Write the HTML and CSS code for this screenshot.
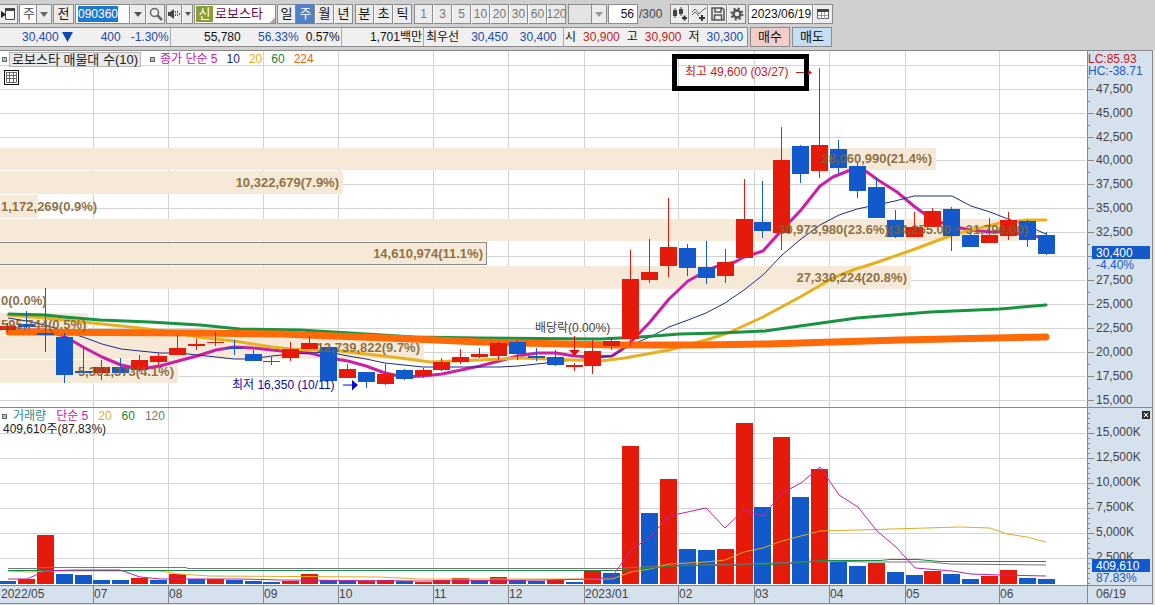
FILE: index.html
```html
<!DOCTYPE html>
<html lang="ko">
<head>
<meta charset="utf-8">
<title>로보스타 주봉 차트</title>
<link rel="stylesheet" href="styles.css">
</head>
<body>
<header class="toolbar">
  <div class="row">
    <button class="btn btn-edge" aria-label="패널 열기"><svg width="15" height="14" viewBox="0 0 15 14"><path d="M4.5 1.5h9v11h-9z" fill="#fff" stroke="#444"/><path d="M4 1h10v3H4z" fill="#444"/><path d="M0 4l5 3.500-5 3.500z" fill="#222"/></svg></button>
    <span class="select-wrap select-period"><select class="select" aria-label="종목 구분"><option>주</option></select><span class="caret" aria-hidden="true"></span></span>
    <button class="btn btn-prev">전</button>
    <div class="group code-group">
      <div class="code-box"><input class="code" aria-label="종목 코드" value="090360"></div>
      <button class="btn btn-small" aria-label="코드 목록"><span class="down"></span></button>
      <button class="btn" aria-label="검색"><svg width="14" height="14" viewBox="0 0 14 14" fill="none" stroke="#666"><circle cx="5.500" cy="5.500" r="4" stroke-width="1.500"/><path d="M8.500 8.500l4.500 4.500" stroke-width="2.500"/></svg></button>
    </div>
    <div class="group sound-group">
      <button class="btn btn-small" aria-label="소리"><svg width="14" height="12" viewBox="0 0 14 12"><path d="M1 4h2l4-3v10l-4-3H1z" fill="#444"/><path d="M8.500 3v6M10.500 3v6M12.500 5v2" stroke="#555" stroke-dasharray="2 1"/></svg></button>
      <button class="btn btn-tiny" aria-label="소리 설정"><span class="down"></span></button>
    </div>
    <div class="stock"><span class="badge">신</span><span class="stock-name">로보스타</span></div>
    <div class="group"><button class="btn">일</button><button class="btn active">주</button><button class="btn">월</button><button class="btn">년</button></div>
    <div class="group"><button class="btn">분</button><button class="btn">초</button><button class="btn">틱</button></div>
    <div class="group nums"><button class="btn">1</button><button class="btn">3</button><button class="btn">5</button><button class="btn">10</button><button class="btn">20</button><button class="btn">30</button><button class="btn">60</button><button class="btn">120</button></div>
    <span class="select-wrap select-empty"><select class="select" aria-label="분 단위" disabled><option></option></select><span class="caret" aria-hidden="true"></span></span>
    <input class="field count" aria-label="표시 개수" value="56"><span class="total">/300</span>
    <div class="group tools">
      <button class="btn" aria-label="봉 추가"><svg width="16" height="16" viewBox="0 0 16 16"><path d="M1 4h4v6H1zM7 3h4v5H7z" fill="#444"/><path d="M3 2v10M9 1v9" stroke="#444"/><path d="M10 12h5M12.500 9.500v5" stroke="#333" stroke-width="2"/></svg></button>
      <button class="btn" aria-label="지표 추가"><svg width="16" height="16" viewBox="0 0 16 16" fill="none" stroke="#666"><path d="M1 6l3-3 4 5 5-5 2-1M1 9l3-3 4 4"/><path d="M8 12h6M11 9v6" stroke="#333" stroke-width="2"/></svg></button>
      <button class="btn" aria-label="저장"><svg width="14" height="14" viewBox="0 0 14 14" fill="none" stroke="#555" stroke-width="1.500"><path d="M1 1h10l2 2v10H1zM4 1v4h6V1M3.500 13V8h7v5"/></svg></button>
      <button class="btn" aria-label="설정"><svg width="14" height="14" viewBox="0 0 14 14" fill="none" stroke="#555"><circle cx="7" cy="7" r="3.500" stroke-width="2.500"/><circle cx="7" cy="7" r="5.500" stroke-width="2" stroke-dasharray="2.200 2.120"/></svg></button>
    </div>
    <div class="group"><input class="field date" aria-label="날짜" value="2023/06/19"><button class="btn btn-cal" aria-label="달력"><svg width="12" height="12" viewBox="0 0 12 12"><path d="M.5 2.500h11v8H.5z" fill="#fff" stroke="#666"/><path d="M0 1h12v3H0z" fill="#444"/><path d="M4.500 4v7M7.500 4v7M1 7.500h10" stroke="#999"/></svg></button></div>
  </div>
  <div class="row">
    <div class="quote">
      <div class="cell cell-price down-text"><span>30,400</span><svg width="11" height="10" viewBox="0 0 11 10"><path d="M0 0h11L5.500 10z" fill="#1446b8"/></svg><span class="diff">400</span><span class="rate">-1.30%</span></div>
      <div class="cell cell-volume"><span>55,780</span><span class="down-text ratio">56.33%</span><span class="turn">0.57%</span></div>
      <div class="cell cell-value"><span>1,701백만</span></div>
      <div class="cell cell-best"><span>최우선</span><span class="down-text">30,450</span><span class="down-text">30,400</span></div>
      <div class="cell cell-ohl"><span>시</span><span class="up-text">30,900</span><span>고</span><span class="up-text">30,900</span><span>저</span><span class="down-text">30,300</span></div>
    </div>
    <button class="trade buy">매수</button>
    <button class="trade sell">매도</button>
  </div>
</header>
<main>
  <section class="pane" aria-label="가격 차트">
    <svg id="price" class="chart" viewBox="0 50 1155 357"></svg>
    <div class="legend">
      <i class="dot"></i><span class="chip">로보스타 매물대 수(10)</span><i class="dot dot-second"></i>
      <span class="c-ma5">종가 단순 5</span><span class="c-ma10">10</span><span class="c-ma20">20</span><span class="c-ma60">60</span><span class="c-ma224">224</span>
    </div>
    <button class="grid-btn" aria-label="표 보기"><svg width="11" height="11" viewBox="0 0 11 11" fill="none" stroke="#666"><path d="M.5.5h10v10H.5zM.5 3.500h10M.5 6.500h10M3.500.5v10M7.500.5v10"/></svg></button>
  </section>
  <section class="pane" aria-label="거래량 차트">
    <svg id="volume" class="chart" viewBox="0 407 1155 198"></svg>
    <div class="legend legend-volume">
      <i class="dot"></i><span class="c-vol">거래량</span><span class="c-ma5">단순 5</span><span class="c-ma20">20</span><span class="c-ma60">60</span><span class="c-ma120">120</span>
    </div>
    <div class="volume-now">409,610주(87.83%)</div>
    <button class="close" aria-label="닫기"><svg width="6" height="6" viewBox="0 0 6 6"><path d="M1 1l4 4M5 1L1 5" stroke="#fff"/></svg></button>
  </section>
</main>
<script src="chart.js"></script>
</body>
</html>
```
FILE: styles.css
```css
* { box-sizing: border-box; }
body {
  margin: 0;
  background: #d0d0d0;
  color: #111;
  font: 12px/16px "Liberation Sans", "Noto Sans CJK KR", sans-serif;
}
button, input, select { font: inherit; color: inherit; margin: 0; padding: 0; border-radius: 0; }

.toolbar { display: flex; flex-direction: column; gap: 3px; padding: 4px 0 3px; overflow: hidden; }
.row { display: flex; align-items: center; height: 20px; white-space: nowrap; }
.row > * { flex: none; }
.group { display: flex; margin-right: 2px; }
.btn {
  display: flex; align-items: center; justify-content: center; flex: none;
  width: 19px; height: 20px;
  background: #ececec; border: 1px solid #8c8c8c; border-left-color: #fff;
  font-size: 13px;
}
.group > .btn:first-child, .btn-prev { border-left-color: #8c8c8c; }
.btn.active { background: #4f81c4; border-color: #4f81c4 #8c8c8c #4f81c4 #4f81c4; color: #fff; }
.btn-edge { width: 18px; margin-right: 1px; border-left: 0; }
.btn-prev { width: 21px; margin: 0 1px; }
.btn-small { width: 16px; }
.btn-tiny { width: 11px; }
.down { border: 4px solid transparent; border-top: 5px solid #555; border-bottom: 0; }
.btn-tiny .down { border-width: 4px 3px 0; }
.select-wrap { position: relative; display: block; height: 20px; border: 1px solid #8c8c8c; background: #fff; }
.select { appearance: none; width: 100%; height: 18px; border: 0; padding-left: 3px; background: transparent; font-size: 13px; color: #444; }
.caret { position: absolute; top: 0; right: 0; width: 15px; height: 18px; background: #ececec; border-left: 1px solid #8c8c8c; pointer-events: none; }
.caret::after { content: ""; position: absolute; top: 7px; left: 3px; border: 4px solid transparent; border-top: 5px solid #666; border-bottom: 0; }
.select-period { width: 33px; }
.select-empty { width: 39px; margin-right: 1px; background: #e4e4e4; }
.select-empty .caret::after { border-top-color: #999; }
.code-box { width: 55px; padding: 1px 2px; background: #fff; border: 1px solid #8c8c8c; }
.code { display: block; width: 40px; height: 16px; border: 0; background: #1f78d0; color: #fff; }
.code-group { margin-right: 1px; }
.sound-group { margin-right: 1px; }
.stock { display: flex; align-items: center; width: 82px; height: 20px; margin-right: 1px; background: linear-gradient(135deg, transparent 94%, #aaa 94%) #fff; border: 1px solid #8c8c8c; font-size: 13px; }
.badge { width: 17px; height: 16px; margin: 0 2px 0 1px; background: #8c9c38; color: #fff; text-align: center; }
.stock-name { color: #6c0c4c; }
.nums .btn { color: #777; font-size: 12px; }
.field { height: 20px; border: 1px solid #8c8c8c; background: #fff; }
.count { width: 30px; padding-right: 3px; text-align: right; }
.total { width: 32px; padding-left: 1px; color: #444; }
.date { width: 65px; padding-left: 2px; }
.btn-cal { width: 20px; }

.quote { display: flex; height: 20px; margin-right: 2px; background: #f0f0f0; border: 1px solid #8c8c8c; border-left: 0; }
.cell { display: flex; align-items: center; border-right: 1px solid #aaa; }
.cell:last-child { border-right: 0; }
.down-text { color: #1c4aa8; }
.up-text { color: #c4221c; }
.cell-price { width: 171px; padding-left: 22px; }
.cell-price svg { margin-left: 3px; }
.diff { width: 48px; text-align: right; }
.rate { width: 48px; text-align: right; }
.cell-volume { width: 171px; padding-left: 33px; }
.ratio { width: 58px; text-align: right; }
.turn { width: 41px; text-align: right; }
.cell-value { width: 82px; padding-right: 1px; justify-content: flex-end; }
.cell-best { width: 140px; padding-left: 2px; gap: 12px; }
.cell-ohl { width: 183px; padding-left: 1px; gap: 7px; }
.trade { width: 40px; height: 20px; margin-right: 2px; border: 1px solid #8c8c8c; font-size: 13px; line-height: 16px; }
.buy { background: #f4cdc8; }
.sell { background: #c6dcf2; }

.pane { position: relative; }
.chart { display: block; width: 100%; height: auto; }
.chart text { font-size: 12px; fill: #444; }
.chart .profile { font-size: 13px; font-weight: bold; fill: #80622f; fill-opacity: .9; }
.chart .low { fill: #0a0a9c; }
.chart .high { fill: #c4181c; }
.chart .fall { fill: #2058c0; }
.chart .now { fill: #fff; }
.legend { position: absolute; top: 2px; left: 2px; display: flex; align-items: center; gap: 9px; height: 14px; font-size: 12px; line-height: 14px; white-space: nowrap; }
.legend-volume { gap: 10px; }
.dot { width: 5px; height: 5px; border: 1px solid #666; background: #bbb; margin-right: -7px; }
.dot-second { margin-right: -4px; }
.chip { padding: 0 2px; background: #e9e9e9; border: 1px solid #b4b4b4; color: #222; font-size: 13px; line-height: 13px; }
.c-ma5 { color: #c422a4; }
.c-ma10 { color: #14288c; }
.c-ma20 { color: #dfae20; }
.c-ma60 { color: #188438; }
.c-ma224 { color: #e46a14; }
.c-ma120 { color: #777; }
.c-vol { color: #2c8c8c; margin-left: 3px; }
.volume-now { position: absolute; top: 14px; left: 3px; color: #222; line-height: 16px; }
.grid-btn { position: absolute; top: 20px; left: 4px; display: flex; padding: 1px; border: 1px solid #111; background: #fff; }
.close { position: absolute; top: 4px; right: 5px; display: flex; padding: 0; border: 1px solid #222; background: #444; }
```
FILE: chart.js
```js
const NS = "http://www.w3.org/2000/svg";
const RED = "#e61a0a", BLUE = "#125acb";
const STEP = 18.887, FIRST = 8;
const AXIS = 1087, EDGE = 1152;

function add(svg, tag, attrs, text) {
  const el = document.createElementNS(NS, tag);
  for (const k in attrs) el.setAttribute(k, attrs[k]);
  if (text !== undefined) el.textContent = text;
  svg.appendChild(el);
}
const rect = (s, x, y, w, h, fill) => add(s, "rect", { x, y, width: w, height: h, fill });
const label = (s, x, y, t, cls, anchor) => add(s, "text", { x, y, class: cls || "", "text-anchor": anchor || "start" }, t);
const line = (s, pts, stroke, width) => add(s, "polyline", {
  points: pts, fill: "none", stroke, "stroke-width": width, "stroke-linejoin": "round",
  "stroke-linecap": width > 2 ? "round" : "butt"
});
const center = i => Math.round(FIRST + STEP * i);

const months = [[0, "2022/05"], [93, "07"], [168, "08"], [263, "09"], [338, "10"], [433, "11"],
  [508, "12"], [584, "2023/01"], [678, "02"], [754, "03"], [829, "04"], [905, "05"], [999, "06"]];

// colour, wick top, body top, body bottom, wick bottom, volume top
const bars = [
  ["r",323,326,330,332,581],["b",311,324,327,328,579],["b",288,333,335,352,535],["b",333,337,375,383,574],
  ["b",347,371,373,373,575],["r",360,367,373,380,580],["b",358,367,373,373,580],["r",355,360,370,372,578],
  ["r",353,356,362,365,580],["r",334,348,355,355,574],["r",339,344,346,350,579],["r",332,342,343,346,579],
  ["b",340,347,349,355,580],["b",350,354,361,361,581],["r",357,361,362,365,582],["r",342,349,358,361,581],
  ["r",336,343,349,349,574],["b",347,347,381,381,580],["r",364,369,378,378,581],["b",372,372,382,388,581],
  ["r",364,374,384,385,580],["b",369,370,379,380,581],["r",368,370,376,378,582],["r",358,362,370,371,580],
  ["r",349,357,362,364,578],["r",348,354,357,358,580],["r",342,343,356,360,577],["b",340,342,354,360,580],
  ["b",348,356,358,361,581],["b",350,357,365,366,580],["r",363,365,367,371,582],["r",340,351,366,374,571],
  ["r",337,341,346,350,573],["r",250,279,339,346,446],["r",239,272,280,283,513],["r",198,247,266,277,479],
  ["b",244,248,268,276,549],["b",241,267,278,284,550],["r",249,262,276,283,549],["r",179,219,258,258,423],
  ["b",181,222,231,238,507],["r",127,160,233,250,437],["b",145,146,174,183,497],["r",68,145,171,178,469],
  ["b",140,149,168,173,562],["b",163,166,191,198,566],["b",177,187,218,218,563],["b",210,220,237,238,572],
  ["r",212,227,237,237,575],["r",208,211,227,227,571],["b",207,209,236,251,574],["b",233,235,247,247,579],
  ["r",218,235,243,243,576],["r",212,220,236,240,570],["b",220,221,240,247,578],["b",232,235,254,255,579]
];
// volume bars follow the change in volume, so their colour differs from the candle's
const volumeColors = "brrbbbbrbrbrbbbrrbbrrbrrrbrbbrbrbrbrbbrrbrbrbbrbbrbbrrbb";

function frame(svg, top, bottom, rows) {
  rect(svg, 0, top, AXIS, bottom - top, "#fff");
  rect(svg, AXIS, top, EDGE - AXIS, bottom - top, "#d6e1ee");
  rows.forEach(y => rect(svg, 0, y, AXIS - 1, 1, "#d4d4d4"));
  months.slice(1).forEach(m => rect(svg, m[0], top, 1, bottom - top, "#d4d4d4"));
}
function border(svg, top, bottom) {
  rect(svg, AXIS, top, 1, bottom - top, "#888");
  rect(svg, EDGE, top, 1, bottom - top, "#888");
  rect(svg, EDGE + 1, top, 2, bottom - top, "#e6e6e6");
}

function drawPrice(svg) {
  const rows = [65,89,113,137,160,184,208,232,256,280,304,328,352,376,400];
  frame(svg, 50, 407, rows);
  [[148,22,936],[171,23,343],[195,23,38],[219,22,1030],[266,23,911],[313,22,88],[336,23,424],[360,23,178]]
    .forEach(b => rect(svg, 0, b[0], b[2], b[1], "#f6e9d8"));
  add(svg, "rect", { x: -1, y: 242.5, width: 487.5, height: 22, fill: "#f6e9d8", stroke: "#888" });

  line(svg, "8,330 45,330 54,333 64,336 83,347 102,357 121,365 140,369 160,366 178,361 197,356 216,350 234,347 253,348 272,350 291,352 310,353 329,358 348,361 366,366 385,373 404,377 423,376 442,374 461,370 480,366 499,361 518,356 537,353 556,353 574,356 593,357 612,356 621,350 631,342 650,322 669,299 688,281 706,271 715,267 735,262 744,257 763,251 782,230 801,210 820,186 833,177 848,171 857,169 867,172 878,180 897,192 915,207 933,220 952,226 970,230 992,232 1008,232 1027,235 1046,238", "#cb20a6", 3);
  line(svg, "8,318 27,321 45,325 64,331 83,337 102,344 121,349 140,351 160,353 178,353 197,355 216,357 234,359 250,359 272,356 291,354 329,352 348,356 366,359 385,363 404,365 423,367 500,367 518,366 537,364 555,362 574,360 593,358 612,356 631,345 650,337 669,327 688,320 706,313 725,303 744,290 763,275 782,255 801,239 820,225 839,215 857,209 876,205 895,201 914,196 952,196 971,206 990,212 1008,219 1027,226 1046,234", "#1c2c88", 1);
  line(svg, "8,315 45,318 64,320 83,322 140,328 178,333 197,337 234,341 272,347 291,349 340,351 366,354 400,358 430,362 480,360 520,358 600,361 625,358 669,350 706,340 728,333 763,317 800,297 833,278 853,270 878,262 915,249 952,235 1000,223 1027,220 1046,220", "#e6b01e", 3);
  line(svg, "9,314 45,315 64,317 100,320 150,322 200,325 240,329 300,330 350,333 414,337 480,338 600,339 640,337 680,334 720,333 765,331 800,326 857,318 930,312 1000,309 1046,305", "#189440", 3);
  line(svg, "9,332 200,333 280,334 413,339 480,342 613,345 700,345 767,344 800,343 900,340 1046,337", "#ff6a08", 7);

  bars.forEach((b, i) => {
    const x = center(i), c = b[0] === "r" ? RED : BLUE;
    rect(svg, x - 9, b[2], 17, b[3] - b[2], c);
    rect(svg, x - 1, b[1], 1, b[4] - b[1], c);
  });

  label(svg, 932, 163, "28,060,990(21.4%)", "profile", "end");
  label(svg, 339, 187, "10,322,679(7.9%)", "profile", "end");
  label(svg, 1, 211, "1,172,269(0.9%)", "profile");
  label(svg, 1028, 234, "30,973,980(23.6%)(34,255.00 ~ 31,790.00)", "profile", "end");
  label(svg, 483, 258, "14,610,974(11.1%)", "profile", "end");
  label(svg, 907, 282, "27,330,224(20.8%)", "profile", "end");
  label(svg, 1, 305, "0(0.0%)", "profile");
  label(svg, 1, 329, "595,744(0.5%)", "profile");
  label(svg, 420, 352, "12,739,822(9.7%)", "profile", "end");
  label(svg, 174, 376, "5,361,373(4.1%)", "profile", "end");

  label(svg, 232, 389, "최저 16,350 (10/11)", "low");
  add(svg, "path", { d: "M343 384.500h9v-4.500l6 5-6 5.500v-5h-9z", fill: "#0a0adc" });
  label(svg, 535, 332, "배당락(0.00%)");
  add(svg, "path", { d: "M574 336h1v14h5l-5.500 6-5.500-6h5z", fill: "#e00c0c" });

  label(svg, 685, 76, "최고 49,600 (03/27)", "high");
  rect(svg, 796, 72, 14, 1, "#b4181c");
  add(svg, "rect", { x: 674.5, y: 56.5, width: 132, height: 32, fill: "none", stroke: "#000", "stroke-width": 5 });
  add(svg, "path", { d: "M808 70l4 2.500-4 2.500z", fill: "#b4181c" });

  rows.slice(1).forEach((y, i) => {
    rect(svg, AXIS, y, 7, 1, "#888");
    rect(svg, AXIS, y - 12, 3, 1, "#888");
    const price = 47500 - 2500 * i;
    if (price !== 30000) label(svg, 1096, y + 4, price.toLocaleString("en-US"));
  });
  label(svg, 1088, 63, "LC:85.93", "high");
  label(svg, 1088, 75, "HC:-38.71", "fall");
  rect(svg, 1092, 246, 58, 13, BLUE);
  label(svg, 1096, 257, "30,400", "now");
  label(svg, 1096, 269, "-4.40%", "fall");
  border(svg, 50, 407);
  rect(svg, 0, 50, EDGE + 1, 1, "#888");
}

function drawVolume(svg) {
  const rows = [433,458,483,508,533,558];
  frame(svg, 407, 585, rows);
  bars.forEach((b, i) => rect(svg, center(i) - 9, b[5], 17, 584 - b[5], volumeColors[i] === "r" ? RED : BLUE));
  line(svg, "8,568.5 36,568.5 40,567.5 186,567.5 188,568.5 620,568.5 631,567.5 690,565 750,564 820,561 870,562 930,562 950,564 1046,565", "#777", 1);
  line(svg, "8,571 30,572 45,571 160,571 178,574 210,576 380,577 420,579 612,579 631,572 650,569 669,564 706,562 725,560 744,552 763,548 782,541 820,531 858,530 960,527 990,528 1007,534 1027,537 1046,542", "#e0ac24", 1);
  line(svg, "8,570.5 620,570.5 640,569 670,566 760,565 800,563 820,560.5 880,560.5 890,559.5 918,559.5 940,561.5 1046,561.5", "#188c40", 1);
  line(svg, "8,579 27,579 45,571 74,570 120,570 140,577 160,579 240,579 280,580 420,581 545,580 593,579 612,577 631,550 650,537 669,516 706,508 725,528 744,510 763,516 782,493 801,483 820,467 839,495 858,507 877,531 896,547 915,568 952,571 971,574 1000,575 1046,576", "#c024a0", 1);

  for (let y = 413; y < 584; y += 5) rect(svg, AXIS, y, 3, 1, "#888");
  rows.forEach((y, i) => {
    rect(svg, AXIS, y, 7, 1, "#888");
    label(svg, 1096, y + 3, (15000 - 2500 * i).toLocaleString("en-US") + "K");
  });
  rect(svg, 1092, 559, 58, 13, BLUE);
  label(svg, 1096, 570, "409,610", "now");
  label(svg, 1096, 582, "87.83%", "fall");

  rect(svg, 0, 585, EDGE, 19, "#d6e1ee");
  rect(svg, 0, 585, EDGE, 1, "#888");
  rect(svg, 0, 603, EDGE + 1, 1, "#888");
  rect(svg, 0, 604, EDGE + 3, 1, "#e0e0e0");
  months.forEach(m => {
    if (m[0]) rect(svg, m[0], 586, 1, 17, "#888");
    label(svg, m[0] + 1, 598, m[1]);
  });
  label(svg, 1096, 598, "06/19");
  border(svg, 407, 604);
  rect(svg, 0, 407, EDGE + 1, 1, "#888");
}

drawPrice(document.getElementById("price"));
drawVolume(document.getElementById("volume"));
```
